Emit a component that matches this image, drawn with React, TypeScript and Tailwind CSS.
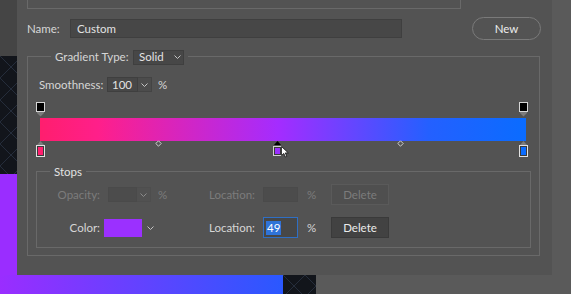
import React from "react";

const Chevron = () => (
  <svg width="7" height="4" viewBox="0 0 7 4">
    <path d="M0.5 0.5L3.5 3.5L6.5 0.5" stroke="#c4c4c4" strokeWidth="1" fill="none" />
  </svg>
);

const TopMarker = () => (
  <svg width="9" height="15" viewBox="0 0 9 15">
    <rect x="0.5" y="0.5" width="8" height="9" fill="#000" stroke="#d6d6d6" />
    <polygon points="1,10 8,10 8,11 4.5,14.5 1,11" fill="#7c7c7c" />
  </svg>
);

const BottomMarker = ({ color, selected }: { color: string; selected?: boolean }) => (
  <svg width="9" height="16" viewBox="0 0 9 16">
    <polygon points="4.5,0 8,4 1,4" fill={selected ? "#000" : "#7c7c7c"} />
    {selected ? (
      <>
        <rect x="0.5" y="5.5" width="8" height="9" fill="#3a3a3a" stroke="#d0d0d0" />
        <rect x="2" y="7" width="5" height="6" fill={color} />
      </>
    ) : (
      <>
        <rect x="0.5" y="4.5" width="8" height="11" fill="#3a3a3a" stroke="#e2e2e2" />
        <rect x="2" y="6" width="5" height="8" fill={color} />
      </>
    )}
  </svg>
);

const Diamond = () => (
  <svg width="7" height="7" viewBox="0 0 7 7">
    <polygon points="3.5,0.8 6.2,3.5 3.5,6.2 0.8,3.5" fill="#555" stroke="#d0d0d0" strokeWidth="1" />
  </svg>
);

const Cursor = () => (
  <svg width="8" height="12" viewBox="0 0 8 12">
    <path d="M0.5 0.5 L0.5 9.5 L2.8 7.4 L4.4 11 L5.8 10.4 L4.3 6.9 L7.3 6.9 Z" fill="#fff" stroke="#111" strokeWidth="0.8" />
  </svg>
);

const stops = [
  { p: 0, color: "#ff1e6e" },
  { p: 49, color: "#9b30ff", selected: true },
  { p: 100, color: "#0a6cff" },
];

const Pattern = () => (
  <svg width="100%" height="100%" className="block">
    <defs>
      <pattern id="dl" width="22" height="22" patternUnits="userSpaceOnUse">
        <path d="M0 22 L22 0 M0 0 L22 22" stroke="#2a3342" strokeWidth="0.8" />
      </pattern>
    </defs>
    <rect width="100%" height="100%" fill="#12151b" />
    <rect width="100%" height="100%" fill="url(#dl)" />
  </svg>
);

export default function App() {
  const font = { fontFamily: "Lato, 'Noto Sans', sans-serif" };
  return (
    <div
      className="relative w-[571px] h-[294px] overflow-hidden bg-[#5a5a5a] text-[11.5px] text-[#d6d6d6]"
      style={font}
    >
      {/* canvas underneath */}
      <div className="absolute left-0 top-0 w-[17px] h-[56px] bg-[#454545]" />
      <div className="absolute left-0 top-[56px] w-[17px] h-[118px]">
        <Pattern />
      </div>
      <div className="absolute left-0 top-[174px] w-[17px] h-[120px] bg-[#9a2dff]" />
      <div className="absolute left-0 top-[275px] w-[283px] h-[19px] bg-[linear-gradient(to_right,#9a2dff,#2a58ff)]" />
      <div className="absolute left-[283px] top-[275px] w-[33px] h-[19px]">
        <Pattern />
      </div>

      {/* dialog */}
      <div className="absolute left-[17px] top-0 w-[535px] h-[275px] bg-[#535353] flex flex-col">
        <div className="ml-[10px] w-[434px] h-[9px] border-x border-b border-[#696969]" />

        {/* name row */}
        <div className="mt-[8px] h-[23px] pl-[10px] flex items-center">
          <span className="w-[43px]">Name:</span>
          <div className="w-[332px] h-[19px] bg-[#474747] border border-[#3f3f3f] flex items-center pl-[6px] text-[#e2e2e2]">
            Custom
          </div>
          <button className="ml-[70px] w-[69px] h-[23px] rounded-full border border-[#7a7a7a] text-[#ececec] text-[11.5px] flex items-center justify-center">
            New
          </button>
        </div>

        {/* gradient group */}
        <div className="mt-[16px] ml-[10px] w-[513px] h-[200px] border border-[#696969] flex flex-col">
          <div className="-mt-[8px] ml-[23px] self-start h-[16px] px-[4px] bg-[#535353] flex items-center">
            <span className="w-[78px]">Gradient Type:</span>
            <div className="w-[51px] h-[15px] bg-[#474747] border border-[#3f3f3f] flex items-center pl-[5px] text-[#e2e2e2]">
              <span className="flex-1">Solid</span>
              <span className="w-[12px] flex justify-center">
                <Chevron />
              </span>
            </div>
          </div>

          <div className="mt-[12px] pl-[11px] h-[15px] flex items-center">
            <span className="w-[68px]">Smoothness:</span>
            <div className="w-[31px] h-[15px] bg-[#474747] border border-[#3f3f3f] flex items-center pl-[4px] text-[#e2e2e2]">
              100
            </div>
            <div className="w-[14px] h-[15px] bg-[#4c4c4c] border border-[#444] border-l-0 flex items-center justify-center">
              <Chevron />
            </div>
            <span className="ml-[6px]">%</span>
          </div>

          {/* top markers */}
          <div className="mt-[10px] ml-[8px] w-[492px] h-[14px] relative">
            <div className="absolute top-0 left-0">
              <TopMarker />
            </div>
            <div className="absolute top-0 right-0">
              <TopMarker />
            </div>
          </div>
          <div className="mt-[2px] ml-[12px] w-[486px] h-[23px] bg-[linear-gradient(to_right,#ff1e6e_0%,#ff1f8a_12%,#a42cff_49%,#2460ff_80%,#0a6cff_100%)]" />
          {/* bottom markers */}
          <div className="ml-[8px] w-[492px] h-[16px] relative">
            {stops.map((s) => (
              <div key={s.p} className="absolute top-0" style={{ left: `${(s.p / 100) * 483}px` }}>
                <BottomMarker color={s.color} selected={s.selected} />
              </div>
            ))}
            <div className="absolute -top-[1px]" style={{ left: `${0.245 * 483 + 1}px` }}>
              <Diamond />
            </div>
            <div className="absolute -top-[1px]" style={{ left: `${0.745 * 483 + 1}px` }}>
              <Diamond />
            </div>
            <div className="absolute top-[5px] left-[245px]">
              <Cursor />
            </div>
          </div>

          {/* stops group */}
          <div className="mt-[14px] ml-[8px] w-[495px] h-[77px] border border-[#696969] flex flex-col">
            <div className="-mt-[8px] ml-[13px] self-start h-[16px] px-[4px] bg-[#535353] flex items-center text-[#e2e2e2]">
              Stops
            </div>

            <div className="mt-[4px] h-[21px] flex items-center text-[#7c7c7c]">
              <span className="w-[63px] text-right">Opacity:</span>
              <div className="ml-[8px] w-[29px] h-[15px] bg-[#4c4c4c] border border-[#4a4a4a]" />
              <div className="w-[14px] h-[15px] bg-[#505050] border border-[#4a4a4a] border-l-0 flex items-center justify-center opacity-50">
                <Chevron />
              </div>
              <span className="ml-[7px] w-[10px]">%</span>
              <span className="w-[87px] text-right">Location:</span>
              <div className="ml-[8px] w-[35px] h-[15px] bg-[#4c4c4c] border border-[#4a4a4a]" />
              <span className="w-[33px] pl-[9px]">%</span>
              <div className="w-[58px] h-[21px] bg-[#4f4f4f] border border-[#5a5a5a] flex items-center justify-center">
                Delete
              </div>
            </div>

            <div className="mt-[12px] h-[21px] flex items-center">
              <span className="w-[63px] text-right">Color:</span>
              <div className="ml-[4px] w-[38px] h-[18px] bg-[#9b30ff]" />
              <span className="ml-[5px] w-[7px] flex items-center pt-[1px]">
                <Chevron />
              </span>
              <span className="w-[101px] text-right">Location:</span>
              <div className="ml-[8px] w-[35px] h-[21px] bg-[#474747] border border-[#2f6fc4] flex items-center pl-[2px]">
                <span className="bg-[#2f73d8] text-white px-[1px] leading-[14px]">49</span>
              </div>
              <span className="w-[33px] pl-[9px]">%</span>
              <button className="w-[58px] h-[21px] bg-[#424242] border border-[#3a3a3a] text-[#ececec] text-[11.5px] flex items-center justify-center">
                Delete
              </button>
            </div>
          </div>
        </div>
      </div>
    </div>
  );
}
